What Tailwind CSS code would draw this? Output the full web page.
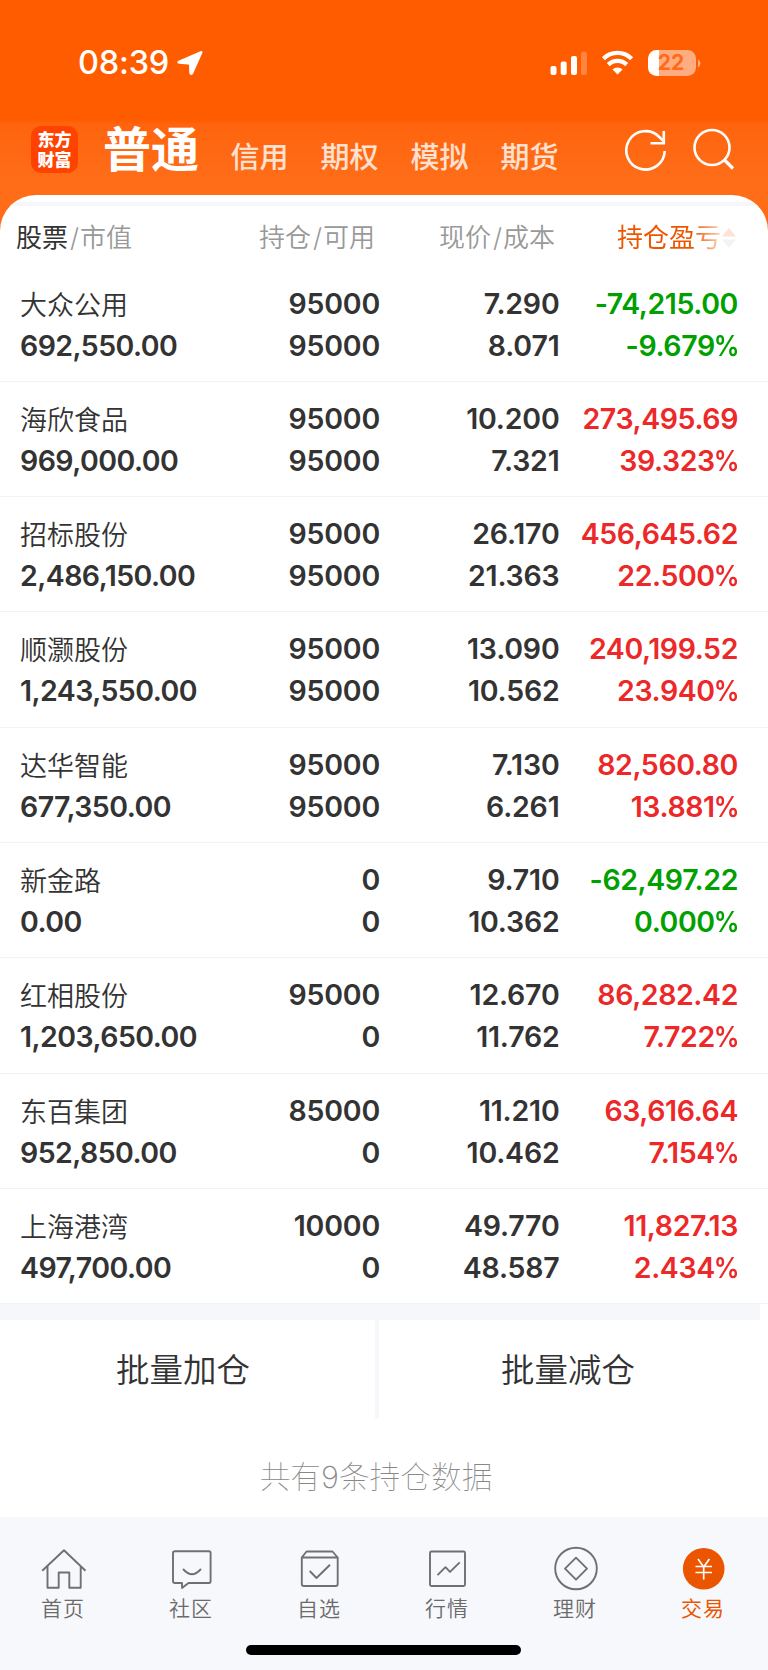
<!DOCTYPE html>
<html lang="zh-CN">
<head>
<meta charset="utf-8">
<meta name="viewport" content="width=device-width">
<title>持仓</title>
<script src="https://cdn.jsdelivr.net/npm/@tailwindcss/browser@4"></script>
</head>
<body class="w-[768px] h-[1670px] overflow-hidden bg-white font-['Inter','Noto_Sans_CJK_SC',sans-serif] text-[#333]">
<div class="flex flex-col h-[1670px]">
  <header class="h-[231px] shrink-0 bg-[linear-gradient(to_bottom,#ff5c00_0,#ff5c00_120px,#ff640e_124px,#ff6d18_180px)] text-white">
    <div class="h-[124px] flex items-start justify-between pl-[78px] pr-[67px] pt-[46px]">
      <div class="flex items-center h-[34px]">
        <span class="w-[91px] text-[32.500px] leading-[34px] font-[550] tracking-[-0.2px] whitespace-nowrap">08:39</span>
        <svg class="ml-[8px]" width="26" height="26" viewBox="0 0 26 26"><path d="M23.500 1.200C24.900.5 25.900 1.500 25.300 3L16.200 23.600C15.400 25.600 12.400 25.300 12.300 23L12 15.300Q12 14.500 11.200 14.500L2 13.800C0 13.600-.2 11.600 1.500 10.800Z" fill="#fff"/></svg>
      </div>
      <div class="flex items-center h-[34px]">
        <svg width="38" height="26" viewBox="0 0 38 26" fill="#fff"><rect x=".5" y="16" width="6" height="9" rx="2"/><rect x="10.700" y="11.500" width="6" height="13.500" rx="2"/><rect x="21" y="6" width="6" height="19" rx="2"/><rect x="31" y="1.500" width="6" height="23.500" rx="2" opacity=".25"/></svg>
        <svg class="ml-[13px]" width="34" height="26" viewBox="0 0 34 26"><g fill="none" stroke="#fff" stroke-width="4.300"><path d="M2.400 8.700a20.200 20.200 0 0 1 28.200 0"/><path d="M7.300 14.600a13.200 13.200 0 0 1 18.400 0"/></g><path d="M16.500 24.500l-5-4.900a7.200 7.200 0 0 1 10 0z" fill="#fff"/></svg>
        <div class="ml-[13px] w-[48px] h-[26px] rounded-[8.500px] bg-[linear-gradient(to_right,#fff_11px,#ffad80_11px)] flex items-center justify-center pr-[2px]"><span class="text-[21px] leading-[26px] font-bold text-[#ff6a18]">22</span></div>
        <svg class="ml-[2px]" width="3" height="9" viewBox="0 0 3 9"><path d="M0 .5q2.500 1.500 2.500 4T0 8.500z" fill="#ffad80"/></svg>
      </div>
    </div>
    <div class="h-[71px] flex items-start pl-[31px]">
      <div class="mt-[2px] w-[47px] h-[47px] rounded-[10px] bg-[#ff4200] text-[17px] leading-[20px] font-black font-['Noto_Sans_CJK_SC',sans-serif] flex flex-col items-center justify-center pb-[1px]"><span>东方</span><span>财富</span></div>
      <h1 class="ml-[25px] w-[104px] text-[48px] leading-[52px] font-bold whitespace-nowrap">普通</h1>
      <nav class="ml-[23.500px] mt-[16px] flex text-[29px] leading-[36px] font-medium text-white/80">
        <a class="w-[90px]">信用</a><a class="w-[90px]">期权</a><a class="w-[90px]">模拟</a><a class="w-[90px]">期货</a>
      </nav>
      <svg class="ml-[34.500px] mt-[4px]" width="44" height="44" viewBox="0 0 44 44" fill="none" stroke="#fff" stroke-width="2.600"><path d="M39.700 23A19.200 19.200 0 1 1 34 8.700l4.500 4.500M38.800 3v12.200H25.500"/></svg>
      <svg class="ml-[24px] mt-[4px]" width="44" height="44" viewBox="0 0 44 44" fill="none" stroke="#fff" stroke-width="2.600"><circle cx="19" cy="19.500" r="17.500"/><path d="M31 31.500l9 9" stroke-width="3.200"/></svg>
    </div>
  </header>

  <main class="-mt-[36px] h-[1322px] shrink-0 bg-white rounded-t-[36px] overflow-hidden pt-[7px]">
    <div class="h-[4px] bg-[#f5f7fa]"></div>
    <div class="h-[60.600px] flex items-center pt-[3px] pl-[16px] text-[26px] leading-[36px] font-[350] text-[#999] whitespace-nowrap">
      <div class="w-[243px] flex"><span class="text-[#333] font-normal">股票</span><span class="ml-[2px] w-[10px]">/</span><span>市值</span></div>
      <div class="w-[180px] flex"><span>持仓</span><span class="ml-[2px] w-[10px]">/</span><span>可用</span></div>
      <div class="w-[178px] flex"><span>现价</span><span class="ml-[2px] w-[10px]">/</span><span>成本</span></div>
      <div class="flex items-center"><span class="font-normal bg-[linear-gradient(to_right,#ec5500_75px,#fbd3bb_104px)] bg-clip-text text-transparent">持仓盈亏</span>
      <svg class="ml-[1px]" width="14" height="20" viewBox="0 0 14 20"><path d="M7 0l7 8.500H0z" fill="#fde3d6"/><path d="M7 20l7-8.500H0z" fill="#f3f3f3"/></svg></div>
    </div>
    <div id="rows"></div>
    <div class="h-[15.500px] w-[760px] bg-[#f6f7fa]"></div>
    <div class="h-[98px] w-[760px] flex text-[33.500px] leading-[100px] font-[350] text-center">
      <button class="w-[375px] h-[98px] pr-[9px]">批量加仓</button>
      <div class="w-[4px] bg-[#f6f7fa]"></div>
      <button class="flex-1 h-[98px] pr-[3px]">批量减仓</button>
    </div>
    <div class="h-[99px] pt-[30px] w-[752px] text-center text-[30.700px] leading-[58px] font-thin text-[#888]">共有<span class="font-extralight">9</span>条持仓数据</div>
  </main>

  <footer class="flex-1 bg-[#f7f8fb] pt-[28px]">
    <div class="h-[98px] flex text-[21px] leading-[32px] tracking-[1px] font-[350] text-[#6b6b6b]">
      <div class="w-[128px] flex flex-col items-center"><svg width="48" height="48" viewBox="0 0 48 48" fill="none" stroke="#707070" stroke-width="1.900" stroke-linejoin="round"><path d="M2.200 25.700 24 5.200l21.500 20.500M7.500 21v21.800H18.700V27.500H29.300V42.800H40.700V21"/></svg><span class="-ml-[2px]">首页</span></div>
      <div class="w-[128px] flex flex-col items-center"><svg width="48" height="48" viewBox="0 0 48 48" fill="none" stroke="#707070" stroke-width="1.900" stroke-linejoin="round" stroke-linecap="round"><path d="M7 6.200H41Q42.600 6.200 42.600 8V36Q42.600 38 41 38H20.500L14 43V38H7Q5 38 5 36V8Q5 6.200 7 6.200ZM15.500 24.500q8.500 9.500 17 0"/></svg><span class="-ml-[2px]">社区</span></div>
      <div class="w-[128px] flex flex-col items-center"><svg width="48" height="48" viewBox="0 0 48 48" fill="none" stroke="#707070" stroke-width="1.900" stroke-linejoin="round"><path d="M5.800 12.500 10.500 6.500H36.500L41.700 12.500M5.800 12.500H41.700V39Q41.700 41 39.700 41H7.800Q5.800 41 5.800 39ZM13.700 26l6.800 7L34 19.800"/></svg><span class="-ml-[2px]">自选</span></div>
      <div class="w-[128px] flex flex-col items-center"><svg width="48" height="48" viewBox="0 0 48 48" fill="none" stroke="#707070" stroke-width="1.900" stroke-linejoin="round"><rect x="6" y="6.500" width="35" height="34.500" rx="1.500"/><path d="M13.500 30.200l8-8 4.500 4.700 9.700-9.500"/></svg><span class="-ml-[2px]">行情</span></div>
      <div class="w-[128px] flex flex-col items-center"><svg width="48" height="48" viewBox="0 0 48 48" fill="none" stroke="#707070" stroke-width="1.900" stroke-linejoin="round"><circle cx="24" cy="23.500" r="20.800"/><path d="M24 12.700 35 23.700 24 34.700 13 23.700Z"/></svg><span class="-ml-[2px]">理财</span></div>
      <div class="w-[128px] flex flex-col items-center text-[#ec5500]"><svg width="48" height="48" viewBox="0 0 48 48"><circle cx="23.700" cy="23.700" r="20.800" fill="#ec5500"/><path d="M18 14l5.700 8 5.700-8M23.700 22v12.500M15.500 21.500h16.500M15.500 27.500h16.500" fill="none" stroke="#fff" stroke-width="1.700"/></svg><span class="-ml-[2px] font-normal">交易</span></div>
    </div>
    <div class="ml-[246px] mt-[2px] w-[275px] h-[10px] rounded-full bg-black"></div>
  </footer>
</div>
<script>
const holdings = [
  ['大众公用','692,550.00','95000','95000','7.290','8.071','-74,215.00','-9.679',0],
  ['海欣食品','969,000.00','95000','95000','10.200','7.321','273,495.69','39.323',1],
  ['招标股份','2,486,150.00','95000','95000','26.170','21.363','456,645.62','22.500',1],
  ['顺灏股份','1,243,550.00','95000','95000','13.090','10.562','240,199.52','23.940',1],
  ['达华智能','677,350.00','95000','95000','7.130','6.261','82,560.80','13.881',1],
  ['新金路','0.00','0','0','9.710','10.362','-62,497.22','0.000',0],
  ['红相股份','1,203,650.00','95000','0','12.670','11.762','86,282.42','7.722',1],
  ['东百集团','952,850.00','85000','0','11.210','10.462','63,616.64','7.154',1],
  ['上海港湾','497,700.00','10000','0','49.770','48.587','11,827.13','2.434',1]
];
document.getElementById('rows').innerHTML = holdings.map(r => {
  const tone = r[8] ? 'text-[#ec2828]' : 'text-[#00a000]';
  return `
  <div class="h-[115.3px] border-b-[1.500px] border-[#f3f3f3] pt-[16px] pl-[20px] grid grid-cols-[200px_160px_179.5px_178.5px] content-start text-right text-[28.500px] leading-[42px] tracking-[-0.2px] font-semibold whitespace-nowrap">
    <div class="h-[42px] text-left text-[27px] leading-[46px] tracking-normal font-[350]">${r[0]}</div><div>${r[2]}</div><div>${r[4]}</div><div class="tracking-[-0.4px] ${tone}">${r[6]}</div>
    <div class="text-left tracking-[-0.55px]">${r[1]}</div><div>${r[3]}</div><div>${r[5]}</div><div class="tracking-[-0.4px] ${tone}">${r[7]}<span class="inline-block origin-right scale-x-[0.9] -ml-[4px] -mr-[1px]">%</span></div>
  </div>`;
}).join('');
</script>
</body>
</html>
